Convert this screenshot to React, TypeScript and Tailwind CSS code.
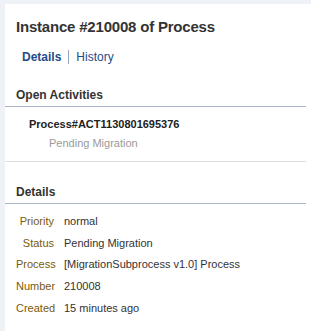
import React from "react";

const rows: [string, string][] = [
  ["Priority", "normal"],
  ["Status", "Pending Migration"],
  ["Process", "[MigrationSubprocess v1.0] Process"],
  ["Number", "210008"],
  ["Created", "15 minutes ago"],
];

export default function App() {
  return (
    <div
      className="min-h-[331px] w-full bg-[#eef2f6] pl-[5px] pt-[4px]"
      style={{ fontFamily: '"Liberation Sans", Arial, sans-serif' }}
    >
      <div className="min-h-[327px] bg-white pb-4 text-[#333]">
        <div className="pr-[5px]">
          {/* header */}
          <h1 className="pl-[11px] pt-[13px] text-[15px] font-bold leading-[20px] tracking-[-0.2px] text-[#333]">
            Instance #210008 of Process
          </h1>
          <div className="mt-[12px] flex h-[16px] items-center pl-[17px] text-[12px] leading-[16px]">
            <span className="font-bold text-[#1f4b8a]">Details</span>
            <span className="mx-[7px] h-[14px] w-px bg-[#9aa6b6]" />
            <span className="text-[#1f4b8a]">History</span>
          </div>

          {/* open activities */}
          <h2 className="mt-[22px] pl-[11px] text-[12px] font-bold leading-[16px]">
            Open Activities
          </h2>
          <div className="mt-[3px] h-px bg-[#a8b5c8]" />
          <div className="pt-[10px] pb-[11px]">
            <div className="pl-[24px] text-[11px] font-bold leading-[14px] text-[#222]">
              Process#ACT1130801695376
            </div>
            <div className="mt-[5px] pl-[44px] text-[11px] leading-[14px] text-[#9a9a9a]">
              Pending Migration
            </div>
          </div>
          <div className="h-px bg-[#dedede]" />

          {/* details */}
          <h2 className="mt-[22px] pl-[11px] text-[12px] font-bold leading-[16px]">
            Details
          </h2>
          <div className="mt-[3px] h-px bg-[#a8b5c8]" />
          <div className="mt-[6px] pl-[11px]">
            {rows.map(([label, value]) => (
              <div key={label} className="flex h-[21.75px] items-center text-[11px] leading-[14px]">
                <span className="w-[38px] text-right text-[#7a5a0c]">{label}</span>
                <span className="ml-[10px] text-[#333]">{value}</span>
              </div>
            ))}
          </div>
        </div>
      </div>
    </div>
  );
}
